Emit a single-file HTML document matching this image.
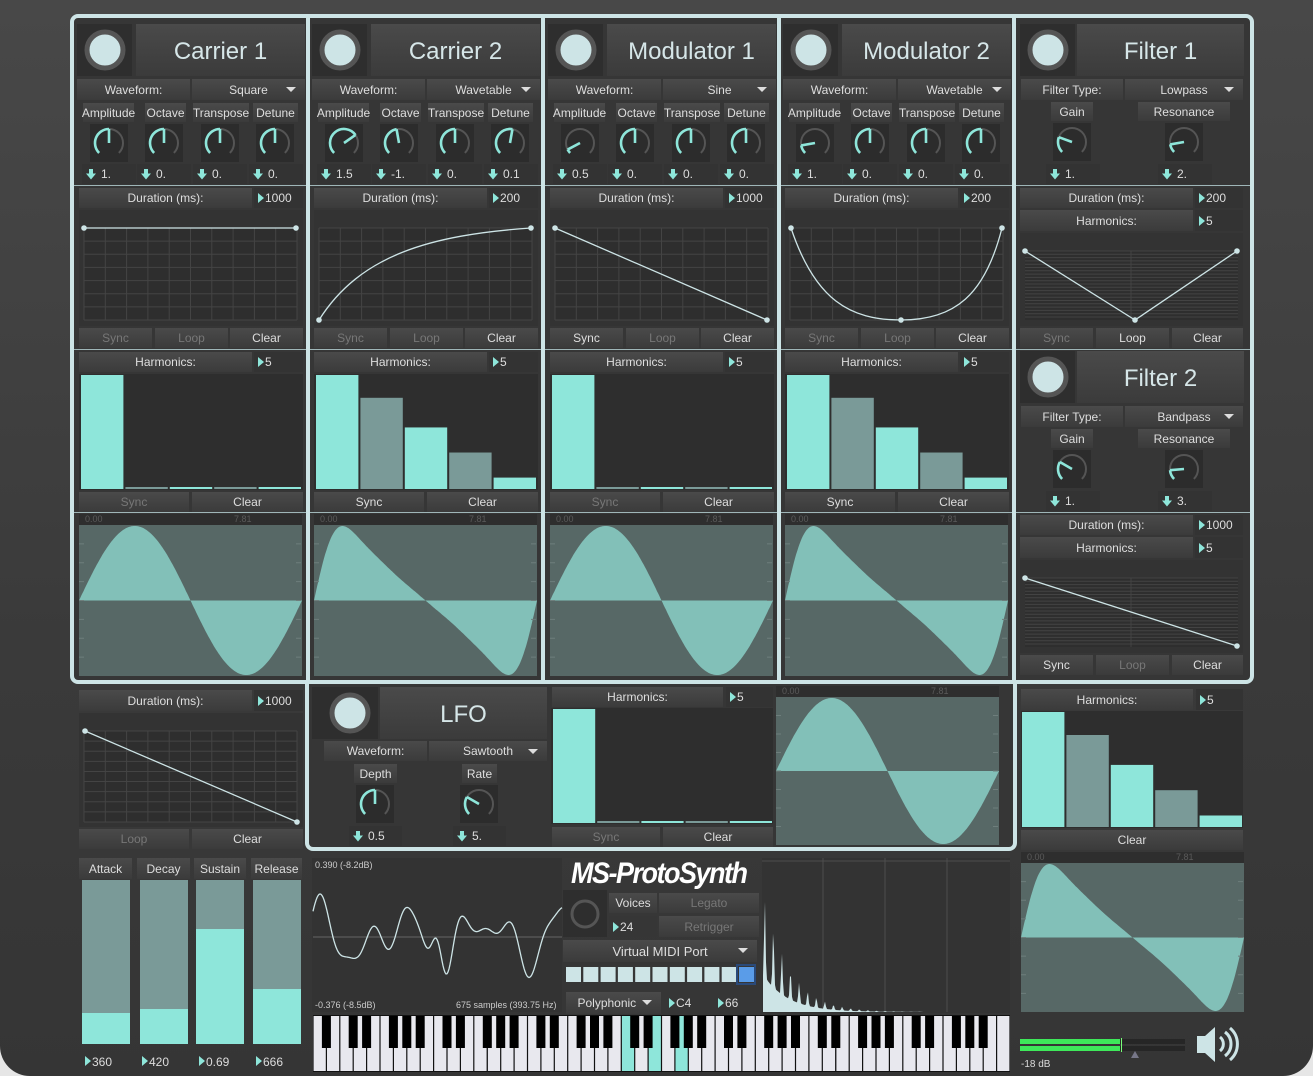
<!DOCTYPE html>
<html><head><meta charset="utf-8">
<style>
html,body{margin:0;padding:0;background:#e6e6e6;}
#app{position:relative;width:1313px;height:1076px;overflow:hidden;background:linear-gradient(#484848,#3a3a3a 60%,#353535);border-radius:0 0 30px 30px;font-family:"Liberation Sans",sans-serif;}
.f{position:absolute;box-sizing:border-box;}
.b{position:absolute;box-sizing:border-box;background:linear-gradient(#4a4a4a,#3b3b3b);color:#dedede;font-size:12px;display:flex;align-items:center;justify-content:center;white-space:nowrap;}
.d{color:#777;}
.ti{font-size:24px;color:#d6e6e8;padding-top:4px;}
.v{position:absolute;box-sizing:border-box;background:#333;color:#dedede;font-size:12px;display:flex;align-items:center;padding-left:4px;white-space:nowrap;}
.dr:after{content:"";position:absolute;right:9px;top:8px;border-top:5px solid #ddd;border-left:5px solid transparent;border-right:5px solid transparent;}
.t{display:inline-block;width:0;height:0;border-top:5px solid transparent;border-bottom:5px solid transparent;border-left:6px solid #8ee6da;margin-right:1px;}
.a{display:inline-block;width:10px;height:11px;margin-right:5px;background:#8ee6da;clip-path:polygon(30% 0,70% 0,70% 45%,100% 45%,50% 100%,0 45%,30% 45%);}
.sm{position:absolute;font-size:9px;color:#5a5a5a;}
.tx{position:absolute;font-size:10px;color:#ccc;white-space:nowrap;}
svg{position:absolute;left:0;top:0;}
</style></head><body>
<div id="app">
<div class="f" style="left:74px;top:18px;width:1176px;height:662px;background:#363636"></div>
<div class="f" style="left:309px;top:680px;width:704px;height:167px;background:#363636"></div>
<div class="f" style="left:74px;top:185px;width:1176px;height:1px;background:#9fb6b8"></div>
<div class="f" style="left:74px;top:349px;width:1176px;height:1px;background:#9fb6b8"></div>
<div class="f" style="left:74px;top:512px;width:1176px;height:1px;background:#9fb6b8"></div>

<svg id="g" width="1313" height="1076"></svg>

<div class="f" style="left:70px;top:14px;width:1184px;height:670px;border:4px solid #cde4e6;border-radius:8px"></div>
<div class="f" style="left:305px;top:680px;width:712px;height:171px;border:4px solid #cde4e6;border-top:none;border-radius:0 0 8px 8px"></div>
<div class="f" style="left:306px;top:14px;width:4px;height:670px;background:#cde4e6"></div>
<div class="f" style="left:541px;top:14px;width:4px;height:670px;background:#cde4e6"></div>
<div class="f" style="left:777px;top:14px;width:4px;height:670px;background:#cde4e6"></div>
<div class="f" style="left:1012px;top:14px;width:4px;height:670px;background:#cde4e6"></div>

<!-- Carrier 1 -->
<div class="b ti" style="left:136px;top:24px;width:169px;height:52px">Carrier 1</div>
<div class="b" style="left:77px;top:79px;width:113px;height:21px">Waveform:</div>
<div class="b dr" style="left:192px;top:79px;width:113px;height:21px">Square</div>
<div class="b" style="left:83px;top:103px;width:51px;height:19px">Amplitude</div>
<div class="b" style="left:145px;top:103px;width:41px;height:19px">Octave</div>
<div class="b" style="left:193px;top:103px;width:56px;height:19px">Transpose</div>
<div class="b" style="left:253px;top:103px;width:45px;height:19px">Detune</div>
<div class="v" style="left:82px;top:164px;width:54px;height:20px"><span class="a"></span>1.</div>
<div class="v" style="left:137px;top:164px;width:54px;height:20px"><span class="a"></span>0.</div>
<div class="v" style="left:193px;top:164px;width:54px;height:20px"><span class="a"></span>0.</div>
<div class="v" style="left:249px;top:164px;width:54px;height:20px"><span class="a"></span>0.</div>
<div class="b" style="left:79px;top:188px;width:173px;height:20px">Duration (ms):</div>
<div class="v" style="left:254px;top:188px;width:49px;height:20px"><span class="t"></span>1000</div>
<div class="b d" style="left:79px;top:328px;width:73px;height:20px">Sync</div>
<div class="b d" style="left:155px;top:328px;width:73px;height:20px">Loop</div>
<div class="b" style="left:230px;top:328px;width:73px;height:20px">Clear</div>
<div class="b" style="left:79px;top:352px;width:173px;height:20px">Harmonics:</div>
<div class="v" style="left:254px;top:352px;width:49px;height:20px"><span class="t"></span>5</div>
<div class="b d" style="left:79px;top:492px;width:110px;height:20px">Sync</div>
<div class="b" style="left:192px;top:492px;width:111px;height:20px">Clear</div>
<div class="sm" style="left:85px;top:514px">0.00</div><div class="sm" style="left:234px;top:514px">7.81</div>

<!-- Carrier 2 -->
<div class="b ti" style="left:371px;top:24px;width:169px;height:52px">Carrier 2</div>
<div class="b" style="left:312px;top:79px;width:113px;height:21px">Waveform:</div>
<div class="b dr" style="left:427px;top:79px;width:113px;height:21px">Wavetable</div>
<div class="b" style="left:318px;top:103px;width:51px;height:19px">Amplitude</div>
<div class="b" style="left:380px;top:103px;width:41px;height:19px">Octave</div>
<div class="b" style="left:428px;top:103px;width:56px;height:19px">Transpose</div>
<div class="b" style="left:488px;top:103px;width:45px;height:19px">Detune</div>
<div class="v" style="left:317px;top:164px;width:54px;height:20px"><span class="a"></span>1.5</div>
<div class="v" style="left:372px;top:164px;width:54px;height:20px"><span class="a"></span>-1.</div>
<div class="v" style="left:428px;top:164px;width:54px;height:20px"><span class="a"></span>0.</div>
<div class="v" style="left:484px;top:164px;width:54px;height:20px"><span class="a"></span>0.1</div>
<div class="b" style="left:314px;top:188px;width:173px;height:20px">Duration (ms):</div>
<div class="v" style="left:489px;top:188px;width:49px;height:20px"><span class="t"></span>200</div>
<div class="b d" style="left:314px;top:328px;width:73px;height:20px">Sync</div>
<div class="b d" style="left:390px;top:328px;width:73px;height:20px">Loop</div>
<div class="b" style="left:465px;top:328px;width:73px;height:20px">Clear</div>
<div class="b" style="left:314px;top:352px;width:173px;height:20px">Harmonics:</div>
<div class="v" style="left:489px;top:352px;width:49px;height:20px"><span class="t"></span>5</div>
<div class="b" style="left:314px;top:492px;width:110px;height:20px">Sync</div>
<div class="b" style="left:427px;top:492px;width:111px;height:20px">Clear</div>
<div class="sm" style="left:320px;top:514px">0.00</div><div class="sm" style="left:469px;top:514px">7.81</div>

<!-- Modulator 1 -->
<div class="b ti" style="left:607px;top:24px;width:169px;height:52px">Modulator 1</div>
<div class="b" style="left:548px;top:79px;width:113px;height:21px">Waveform:</div>
<div class="b dr" style="left:663px;top:79px;width:113px;height:21px">Sine</div>
<div class="b" style="left:554px;top:103px;width:51px;height:19px">Amplitude</div>
<div class="b" style="left:616px;top:103px;width:41px;height:19px">Octave</div>
<div class="b" style="left:664px;top:103px;width:56px;height:19px">Transpose</div>
<div class="b" style="left:724px;top:103px;width:45px;height:19px">Detune</div>
<div class="v" style="left:553px;top:164px;width:54px;height:20px"><span class="a"></span>0.5</div>
<div class="v" style="left:608px;top:164px;width:54px;height:20px"><span class="a"></span>0.</div>
<div class="v" style="left:664px;top:164px;width:54px;height:20px"><span class="a"></span>0.</div>
<div class="v" style="left:720px;top:164px;width:54px;height:20px"><span class="a"></span>0.</div>
<div class="b" style="left:550px;top:188px;width:173px;height:20px">Duration (ms):</div>
<div class="v" style="left:725px;top:188px;width:49px;height:20px"><span class="t"></span>1000</div>
<div class="b" style="left:550px;top:328px;width:73px;height:20px">Sync</div>
<div class="b d" style="left:626px;top:328px;width:73px;height:20px">Loop</div>
<div class="b" style="left:701px;top:328px;width:73px;height:20px">Clear</div>
<div class="b" style="left:550px;top:352px;width:173px;height:20px">Harmonics:</div>
<div class="v" style="left:725px;top:352px;width:49px;height:20px"><span class="t"></span>5</div>
<div class="b d" style="left:550px;top:492px;width:110px;height:20px">Sync</div>
<div class="b" style="left:663px;top:492px;width:111px;height:20px">Clear</div>
<div class="sm" style="left:556px;top:514px">0.00</div><div class="sm" style="left:705px;top:514px">7.81</div>

<!-- Modulator 2 -->
<div class="b ti" style="left:842px;top:24px;width:169px;height:52px">Modulator 2</div>
<div class="b" style="left:783px;top:79px;width:113px;height:21px">Waveform:</div>
<div class="b dr" style="left:898px;top:79px;width:113px;height:21px">Wavetable</div>
<div class="b" style="left:789px;top:103px;width:51px;height:19px">Amplitude</div>
<div class="b" style="left:851px;top:103px;width:41px;height:19px">Octave</div>
<div class="b" style="left:899px;top:103px;width:56px;height:19px">Transpose</div>
<div class="b" style="left:959px;top:103px;width:45px;height:19px">Detune</div>
<div class="v" style="left:788px;top:164px;width:54px;height:20px"><span class="a"></span>1.</div>
<div class="v" style="left:843px;top:164px;width:54px;height:20px"><span class="a"></span>0.</div>
<div class="v" style="left:899px;top:164px;width:54px;height:20px"><span class="a"></span>0.</div>
<div class="v" style="left:955px;top:164px;width:54px;height:20px"><span class="a"></span>0.</div>
<div class="b" style="left:785px;top:188px;width:173px;height:20px">Duration (ms):</div>
<div class="v" style="left:960px;top:188px;width:49px;height:20px"><span class="t"></span>200</div>
<div class="b d" style="left:785px;top:328px;width:73px;height:20px">Sync</div>
<div class="b d" style="left:861px;top:328px;width:73px;height:20px">Loop</div>
<div class="b" style="left:936px;top:328px;width:73px;height:20px">Clear</div>
<div class="b" style="left:785px;top:352px;width:173px;height:20px">Harmonics:</div>
<div class="v" style="left:960px;top:352px;width:49px;height:20px"><span class="t"></span>5</div>
<div class="b" style="left:785px;top:492px;width:110px;height:20px">Sync</div>
<div class="b" style="left:898px;top:492px;width:111px;height:20px">Clear</div>
<div class="sm" style="left:791px;top:514px">0.00</div><div class="sm" style="left:940px;top:514px">7.81</div>

<!-- Filter 1 -->
<div class="b ti" style="left:1077px;top:24px;width:167px;height:52px">Filter 1</div>
<div class="b" style="left:1021px;top:79px;width:102px;height:21px">Filter Type:</div>
<div class="b dr" style="left:1125px;top:79px;width:118px;height:21px">Lowpass</div>
<div class="b" style="left:1051px;top:102px;width:42px;height:19px">Gain</div>
<div class="b" style="left:1138px;top:102px;width:92px;height:19px">Resonance</div>
<div class="v" style="left:1046px;top:164px;width:54px;height:20px"><span class="a"></span>1.</div>
<div class="v" style="left:1158px;top:164px;width:54px;height:20px"><span class="a"></span>2.</div>
<div class="b" style="left:1020px;top:188px;width:173px;height:20px">Duration (ms):</div>
<div class="v" style="left:1195px;top:188px;width:48px;height:20px"><span class="t"></span>200</div>
<div class="b" style="left:1020px;top:210px;width:173px;height:21px">Harmonics:</div>
<div class="v" style="left:1195px;top:210px;width:48px;height:21px"><span class="t"></span>5</div>
<div class="b d" style="left:1020px;top:328px;width:73px;height:20px">Sync</div>
<div class="b" style="left:1096px;top:328px;width:73px;height:20px">Loop</div>
<div class="b" style="left:1172px;top:328px;width:71px;height:20px">Clear</div>

<!-- Filter 2 -->
<div class="b ti" style="left:1077px;top:351px;width:167px;height:52px">Filter 2</div>
<div class="b" style="left:1021px;top:406px;width:102px;height:21px">Filter Type:</div>
<div class="b dr" style="left:1125px;top:406px;width:118px;height:21px">Bandpass</div>
<div class="b" style="left:1051px;top:429px;width:42px;height:19px">Gain</div>
<div class="b" style="left:1138px;top:429px;width:92px;height:19px">Resonance</div>
<div class="v" style="left:1046px;top:491px;width:54px;height:20px"><span class="a"></span>1.</div>
<div class="v" style="left:1158px;top:491px;width:54px;height:20px"><span class="a"></span>3.</div>
<div class="b" style="left:1020px;top:515px;width:173px;height:20px">Duration (ms):</div>
<div class="v" style="left:1195px;top:515px;width:48px;height:20px"><span class="t"></span>1000</div>
<div class="b" style="left:1020px;top:537px;width:173px;height:21px">Harmonics:</div>
<div class="v" style="left:1195px;top:537px;width:48px;height:21px"><span class="t"></span>5</div>
<div class="b" style="left:1020px;top:655px;width:73px;height:20px">Sync</div>
<div class="b d" style="left:1096px;top:655px;width:73px;height:20px">Loop</div>
<div class="b" style="left:1172px;top:655px;width:71px;height:20px">Clear</div>

<!-- LFO env -->
<div class="b" style="left:79px;top:690px;width:173px;height:21px">Duration (ms):</div>
<div class="v" style="left:254px;top:690px;width:49px;height:21px"><span class="t"></span>1000</div>
<div class="b d" style="left:79px;top:829px;width:110px;height:20px">Loop</div>
<div class="b" style="left:192px;top:829px;width:111px;height:20px">Clear</div>

<!-- LFO -->
<div class="b ti" style="left:380px;top:687px;width:167px;height:52px">LFO</div>
<div class="b" style="left:324px;top:741px;width:103px;height:20px">Waveform:</div>
<div class="b dr" style="left:429px;top:741px;width:118px;height:20px">Sawtooth</div>
<div class="b" style="left:354px;top:764px;width:43px;height:19px">Depth</div>
<div class="b" style="left:462px;top:764px;width:35px;height:19px">Rate</div>
<div class="v" style="left:349px;top:826px;width:53px;height:20px"><span class="a"></span>0.5</div>
<div class="v" style="left:453px;top:826px;width:53px;height:20px"><span class="a"></span>5.</div>
<div class="b" style="left:552px;top:687px;width:171px;height:20px">Harmonics:</div>
<div class="v" style="left:726px;top:687px;width:47px;height:20px"><span class="t"></span>5</div>
<div class="b d" style="left:552px;top:827px;width:108px;height:20px">Sync</div>
<div class="b" style="left:663px;top:827px;width:110px;height:20px">Clear</div>
<div class="sm" style="left:782px;top:686px">0.00</div><div class="sm" style="left:931px;top:686px">7.81</div>

<!-- Right column -->
<div class="b" style="left:1021px;top:689px;width:172px;height:21px">Harmonics:</div>
<div class="v" style="left:1196px;top:689px;width:47px;height:21px"><span class="t"></span>5</div>
<div class="b" style="left:1021px;top:830px;width:222px;height:20px">Clear</div>
<div class="sm" style="left:1027px;top:852px">0.00</div><div class="sm" style="left:1176px;top:852px">7.81</div>
<div class="tx" style="left:1021px;top:1059px;font-size:10px;color:#ddd">-18 dB</div>

<!-- ADSR -->
<div class="b" style="left:79px;top:858px;width:53px;height:21px">Attack</div>
<div class="b" style="left:137px;top:858px;width:53px;height:21px">Decay</div>
<div class="b" style="left:194px;top:858px;width:52px;height:21px">Sustain</div>
<div class="b" style="left:251px;top:858px;width:51px;height:21px">Release</div>
<div class="tx" style="left:85px;top:1055px;font-size:12px;color:#ddd"><span class="t"></span>360</div>
<div class="tx" style="left:142px;top:1055px;font-size:12px;color:#ddd"><span class="t"></span>420</div>
<div class="tx" style="left:199px;top:1055px;font-size:12px;color:#ddd"><span class="t"></span>0.69</div>
<div class="tx" style="left:256px;top:1055px;font-size:12px;color:#ddd"><span class="t"></span>666</div>

<div class="tx" style="left:315px;top:860px;font-size:9px">0.390 (-8.2dB)</div>
<div class="tx" style="left:315px;top:1000px;font-size:9px">-0.376 (-8.5dB)</div>
<div class="tx" style="left:456px;top:1000px;font-size:9px">675 samples (393.75 Hz)</div>

<div class="tx" style="left:571px;top:858px;font-size:27px;font-weight:bold;font-style:italic;color:#fff;letter-spacing:-1.5px;transform:scaleY(1.1)">MS-ProtoSynth</div>
<div class="b" style="left:609px;top:893px;width:48px;height:20px">Voices</div>
<div class="v" style="left:609px;top:916px;width:48px;height:21px;background:#363636"><span class="t"></span>24</div>
<div class="b d" style="left:659px;top:893px;width:100px;height:20px">Legato</div>
<div class="b d" style="left:659px;top:916px;width:100px;height:21px">Retrigger</div>
<div class="b dr" style="left:563px;top:940px;width:194px;height:22px;font-size:13px">Virtual MIDI Port</div>
<div class="b dr" style="left:566px;top:992px;width:95px;height:22px">Polyphonic&nbsp;&nbsp;&nbsp;&nbsp;</div>
<div class="v" style="left:665px;top:992px;width:46px;height:22px;background:#363636"><span class="t"></span>C4</div>
<div class="v" style="left:714px;top:992px;width:46px;height:22px;background:#363636"><span class="t"></span>66</div>

<svg id="g2" width="1313" height="1076"></svg>
</div>
<script>
var S=[];
function R(x,y,w,h,f){S.push('<rect x="'+x+'" y="'+y+'" width="'+w+'" height="'+h+'" fill="'+f+'"/>');}
function P(a,cx,cy,r){a=a*Math.PI/180;return [cx+r*Math.sin(a),cy-r*Math.cos(a)];}
function knob(cx,cy,deg){
 R(cx-19,cy-19,38,38,'#2c2c2c');
 var s=P(-135,cx,cy,14),e=P(135,cx,cy,14),v=P(deg,cx,cy,14);
 S.push('<path d="M'+s+' A14 14 0 1 1 '+e+'" fill="none" stroke="#555" stroke-width="2"/>');
 var lg=(deg+135)>180?1:0;
 if(deg>-135)S.push('<path d="M'+s+' A14 14 0 '+lg+' 1 '+v+'" fill="none" stroke="#8ee6da" stroke-width="2.6"/>');
 S.push('<line x1="'+cx+'" y1="'+cy+'" x2="'+v[0]+'" y2="'+v[1]+'" stroke="#8ee6da" stroke-width="2.6"/>');
}
function head(x,y){R(x,y,55,52,'#2e2e2e');S.push('<circle cx="'+(x+28)+'" cy="'+(y+26)+'" r="18" fill="#cde4e6" stroke="#555" stroke-width="5"/>');}
function grid(x,y,w,h,nx,ny){var g='';for(var i=0;i<=nx;i++){var X=x+w*i/nx;g+='M'+X+' '+y+'V'+(y+h);}for(var j=0;j<=ny;j++){var Y=y+h*j/ny;g+='M'+x+' '+Y+'H'+(x+w);}S.push('<path d="'+g+'" stroke="#444" stroke-width="1" fill="none"/>');}
function env(pts,d){S.push('<path d="'+d+'" fill="none" stroke="#cde4e6" stroke-width="1.3"/>');pts.forEach(function(p){S.push('<circle cx="'+p[0]+'" cy="'+p[1]+'" r="2.8" fill="#cde4e6"/>');});}
function bars(x,y,w,h,v){var bw=(w-8)/5;for(var i=0;i<5;i++){var bx=x+i*(bw+2);var hh=Math.max(2,h*v[i]);R(bx,y+h-hh,bw,hh,(i%2==1)?'#7a9a98':'#8ee6da');}}
function wave(x,y,w,h,f){R(x,y-11,w,11,'#2e2e2e');R(x,y,w,h,'#576866');var m=y+h/2,d='M'+x+' '+m;var mx=0,vals=[];for(var i=0;i<=200;i++){var v=f(i/200);vals.push(v);mx=Math.max(mx,Math.abs(v));}for(i=0;i<=200;i++){d+='L'+(x+w*i/200).toFixed(1)+' '+(m-vals[i]/mx*(h/2-1)).toFixed(1);}d+='L'+(x+w)+' '+m+'Z';S.push('<path d="'+d+'" fill="#82c0b8"/>');
 for(var k=1;k<8;k++){var yy=y+h*k/8;S.push('<path d="M'+x+' '+yy+'h5M'+(x+w-6)+' '+yy+'h5" stroke="#6e7e7c"/>');}}
var sine=function(t){return Math.sin(2*Math.PI*t);};
var skew=function(t){var a=[1,.42,.17,.06,.015],s=0;for(var n=1;n<=5;n++)s+=a[n-1]*Math.sin(2*Math.PI*n*t);return s;};

var cols=[77,312,548,783],kd=[[0,0,0,0],[55,-10,0,10],[-118,0,0,0],[-100,0,0,0]];
var hv=[[1,0,0,0,0],[1,.8,.54,.32,.1],[1,0,0,0,0],[1,.8,.54,.32,.1]];
cols.forEach(function(x,i){
 head(x,24);
 [13,68,124,179].forEach(function(k,j){knob(x+k+19,143,kd[i][j]);});
 R(x+2,210,224,116,'#333');R(x+7,228,213,92,'#2e2e2e');grid(x+7,228,213,92,10,7);
 R(x+2,374,224,116,'#2e2e2e');bars(x+4,375,220,114,hv[i]);
 wave(x+2,525,223,151,(i%2==0)?sine:skew);
});
env([[84,228],[296,228]],'M84 228H296');
env([[319,320],[531,228]],'M319 320C360 255 430 235 531 228');
env([[555,228],[767,320]],'M555 228L767 320');
env([[791,228],[901,320],[1002,228]],'M791 228C815 300 850 320 901 320C955 320 985 295 1002 228');
[0,327].forEach(function(o,i){
 head(1020,24+o);
 knob(1072,142+o,i?-60:-70);knob(1184,142+o,i?-95:-100);
 R(1020,233+o,223,93,'#333');R(1025,251+o,213,69,'#2e2e2e');
 var g='';for(var yy=251+o;yy<=320+o;yy+=3.3)g+='M1025 '+yy+'H1238';g+='M1131 '+(251+o)+'V'+(320+o);
 S.push('<path d="'+g+'" stroke="#434343" stroke-width="1"/>');
});
env([[1025,251],[1135,320],[1237,251]],'M1025 251L1135 320L1237 251');
env([[1025,578],[1237,646]],'M1025 578L1237 646');
R(79,713,224,114,'#333');R(84,731,213,91,'#2e2e2e');grid(84,731,213,91,10,9);
env([[85,731],[297,822]],'M85 731L297 822');
R(312,687,66,52,'#2e2e2e');S.push('<circle cx="350" cy="713" r="18" fill="#cde4e6" stroke="#555" stroke-width="5"/>');
knob(375,804,0);knob(479,804,-60);
R(551,708,222,116,'#2e2e2e');bars(553,709,219,114,[1,0,0,0,0]);
wave(776,697,223,148,sine);
R(1021,711,222,117,'#2e2e2e');bars(1022,712,220,115,[1,.8,.54,.32,.1]);
wave(1021,863,223,149,skew);
R(1020,1039,165,5,'#262626');R(1020,1046,165,5,'#262626');
R(1020,1039,100,5,'#3ee85a');R(1020,1046,100,5,'#3ee85a');R(1121,1038,1,14,'#7f7');
S.push('<path d="M1131 1058l4-7 4 7z" fill="#778"/>');
S.push('<path d="M1197 1036h8l10-9v35l-10-9h-8z" fill="#cde4e6"/><path d="M1220 1037a9 9 0 0 1 0 14M1225 1032a15 15 0 0 1 0 24M1230 1028a21 21 0 0 1 0 32" stroke="#cde4e6" stroke-width="3" fill="none"/>');
[[82,1013],[140,1009],[196,929],[253,989]].forEach(function(a){R(a[0],880,48,164,'#7a9a98');R(a[0],a[1],48,1044-a[1],'#8ee6da');});
R(312,858,250,154,'#333');S.push('<path d="M313 937H562" stroke="#666"/>');
var d='';for(var i=0;i<=249;i++){var t=i/249;var v=0.28*Math.sin(2*Math.PI*5.3*t+0.5)+0.3*Math.sin(2*Math.PI*3*t+1.2)+0.12*Math.sin(2*Math.PI*9*t)+0.5*Math.exp(-Math.pow((t-0.5)/0.05,2))*Math.cos(2*Math.PI*8*(t-0.5));d+=(i?'L':'M')+(313+i)+' '+(937-v*62).toFixed(1);}
S.push('<path d="'+d+'" fill="none" stroke="#cde4e6" stroke-width="1.3"/>');
R(563,890,44,47,'#2e2e2e');S.push('<circle cx="585" cy="914" r="13" fill="none" stroke="#555" stroke-width="3"/>');
for(var q=0;q<11;q++){R(566+q*17.3,967,15,15,q==10?'#5a9ce8':'#cde4e6');}
S.push('<rect x="737" y="965" width="18" height="19" fill="none" stroke="#2a4a7a" stroke-width="2"/>');
R(762,858,248,155,'#333');S.push('<path d="M823 858V1012M885 858V1012M947 858V1012M762 861H1010" stroke="#4e4e4e"/>');
var sp='M763 1012';for(i=0;i<160;i++){var x=763+i,ph=(i%8.6)/8.6,pk=Math.exp(-Math.pow((ph-0.2)/0.12,2));var env2=Math.exp(-i/25);var h=(i<3?110*(i+1)/3:(125*env2*(0.3+0.7*pk)));sp+='L'+x+' '+(1012-Math.max(0,Math.min(118,h))).toFixed(1);}sp+='L923 1012Z';
S.push('<path d="'+sp+'" fill="#cde4e6"/>');
var kb='<rect x="313" y="1015" width="697" height="57" fill="#111"/>';var ww=697/52;
for(i=0;i<52;i++){var hl=(i==23||i==25||i==27);kb+='<rect x="'+(313+i*ww+0.6).toFixed(1)+'" y="1016" width="'+(ww-1.2).toFixed(1)+'" height="55" fill="'+(hl?'#8ee6da':'#e8e8ee')+'"/>';}
var wn=['A','B','C','D','E','F','G'];
for(i=0;i<51;i++){var n=wn[i%7];if(n=='B'||n=='E')continue;var bx=313+(i+1)*ww-4.5;kb+='<rect x="'+bx.toFixed(1)+'" y="1016" width="9" height="32" fill="#000"/>';}
document.getElementById('g').innerHTML=S.join('');
document.getElementById('g2').innerHTML=kb;
</script>
</body></html>
